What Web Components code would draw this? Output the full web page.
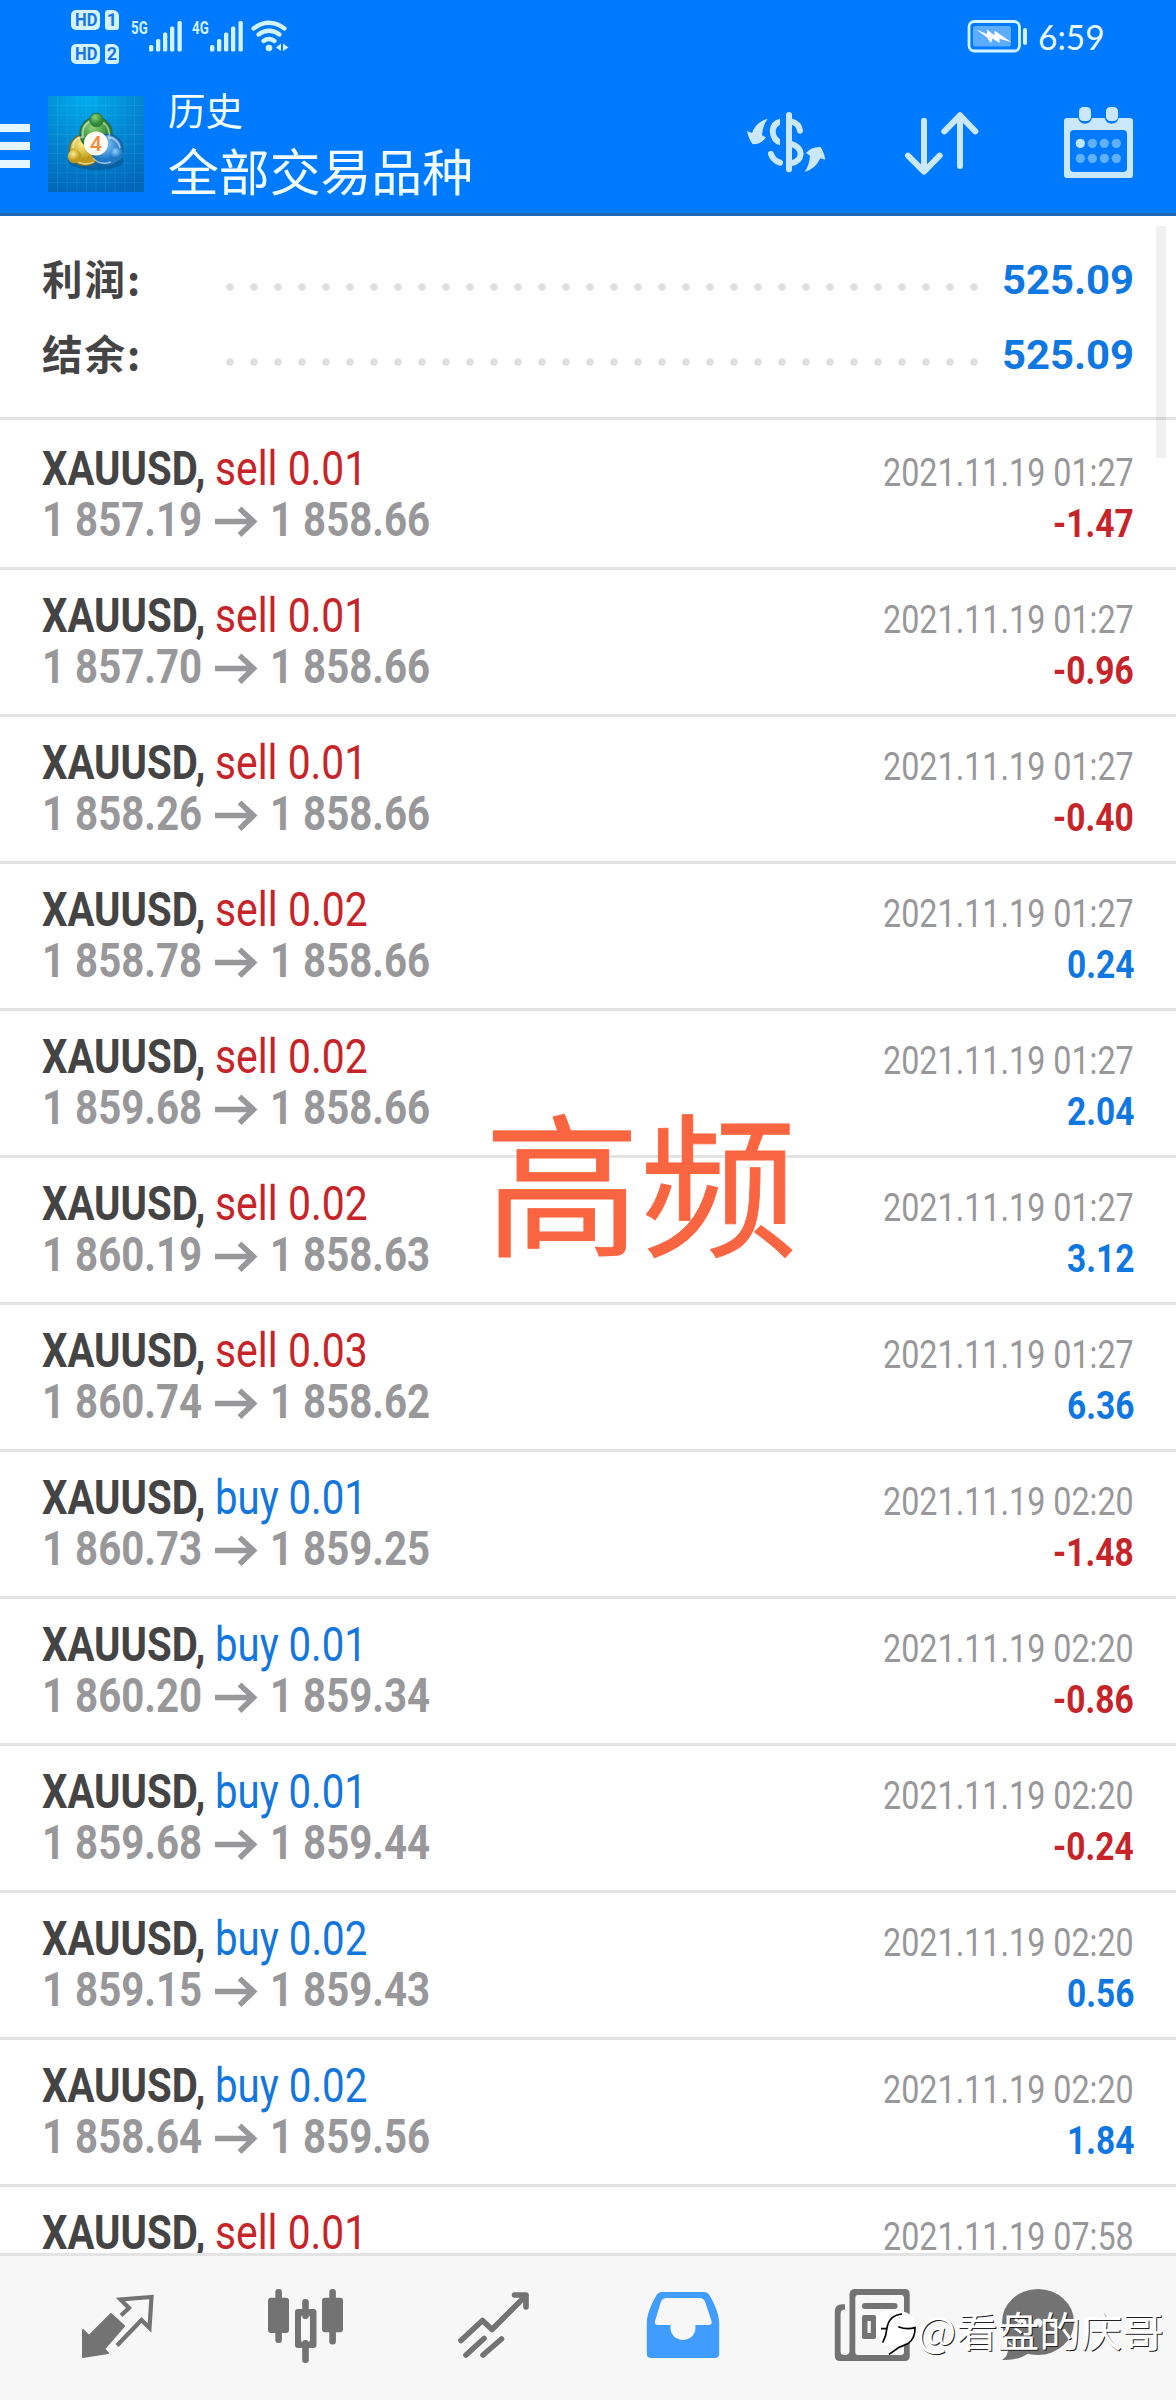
<!DOCTYPE html>
<html lang="zh-CN">
<head>
<meta charset="utf-8">
<title>历史</title>
<style>
html,body{margin:0;padding:0;background:#fff}
body{width:1176px;height:2400px;overflow:hidden;font-family:Roboto,"Noto Sans CJK SC",sans-serif}
</style>
</head>
<body>
<history-app></history-app>
<script>
// Single-line text squeezed horizontally to a given advance width.
class FitText extends HTMLElement{
  connectedCallback(){
    const w=+this.getAttribute('w');
    const r=this.attachShadow({mode:'open'});
    r.innerHTML=`<style>:host{display:block;width:${w}px;white-space:nowrap;flex:none}span{display:inline-block;transform-origin:0 50%}</style><span><slot></slot></span>`;
    const s=r.querySelector('span');
    s.style.transform=`scaleX(${w/s.offsetWidth})`;
  }
}
customElements.define('fit-text',FitText);

class StatusBar extends HTMLElement{
  connectedCallback(){
    const bars=[[1.5,45],[8.5,39],[15.5,32.5],[22.5,26.5],[30,21]].map(([x,y])=>`<rect x="${x-1.5}" y="${y-18}" width="4.3" height="${51.5-y}" rx="1.6"/>`).join('');
    this.attachShadow({mode:'open'}).innerHTML=`<style>
:host{display:flex;height:72px;padding:0 71px 0 71px;justify-content:space-between;color:#d2f3ff;fill:#d2f3ff;box-sizing:border-box}
.l,.r{display:flex;align-items:flex-start}
.hd{display:flex;flex-direction:column;gap:14px;padding-top:9.500px;width:49px}
.p{display:flex;gap:5px}
.b{height:20px;border-radius:5px;background:#d2f3ff;color:#1676e6;font:700 18px/20px "Roboto";display:flex;justify-content:center}
.b.a{width:29px}.b.n{width:14px;border-radius:3px 6px 3px 3px}
.net{display:flex;padding-top:18px}
.g{font:700 18px/20px Roboto;margin-left:11px}
.net .bars{margin-left:1px}
.net+.net .g{margin-left:10px}
svg{display:block}
.wifi{margin:20px 0 0 8px}
.bat{margin:20px 11px 0 0}
.time{font:400 35px/44px Lato;padding-top:14px;color:#eaf9ff}
</style>
<div class="l"><div class="hd">
<div class="p"><div class="b a"><fit-text w="22">HD</fit-text></div><div class="b n">1</div></div>
<div class="p"><div class="b a"><fit-text w="22">HD</fit-text></div><div class="b n">2</div></div></div>
<div class="net"><fit-text class="g" w="17">5G</fit-text><svg class="bars" width="33" height="36">${bars}</svg></div>
<div class="net"><fit-text class="g" w="17">4G</fit-text><svg class="bars" width="33" height="36">${bars}</svg></div>
<svg class="wifi" width="39" height="34" viewBox="251 20 39 34"><g fill="none" stroke="#d2f3ff" stroke-width="4.2" stroke-linecap="round"><path d="M253.5 28.5Q269 17 284.500 28.500M258.500 34.500Q269 27 279.500 34.500M263.500 41Q269 37 274.500 41"/></g><circle cx="269" cy="48" r="3.300"/><path d="M276 47.500L281 43.500V51zM283 43.500L288.500 47.500L283 51z"/></svg></div>
<div class="r"><svg class="bat" width="60" height="33" viewBox="967 20 60 33"><rect x="969" y="21.500" width="50.500" height="29.500" rx="5.500" fill="none" stroke="#d2f3ff" stroke-width="2.800"/><rect x="973" y="26" width="38" height="20.500" rx="2.500" fill="#5cacff"/><path fill="#fff" d="M976 29.500L987 34V29.500L994.500 35.500V30.500L1011 42L999.500 38.800V43L992.500 38.500L991 43L986.500 37z"/><rect x="1023" y="28" width="4" height="17" rx="2"/></svg>
<fit-text class="time" w="67">6:59</fit-text></div>`;
  }
}
customElements.define('status-bar',StatusBar);

class AppHeader extends HTMLElement{
  connectedCallback(){
    let grid='';
    for(let i=1;i<10;i++)grid+=`<path d="M${i*9.6} 0V96M0 ${i*9.6}H96"/>`;
    this.attachShadow({mode:'open'}).innerHTML=`<style>
:host{display:flex;height:141px;color:#f2fdff;align-items:flex-start}
svg{display:block;flex:none}
.menu{margin-top:52px;width:30px;display:flex;flex-direction:column;gap:10px}
.menu i{height:8px;background:#e6f6ff}
.logo{margin:24px 0 0 18px}
.t{margin-left:24px;width:579px;padding-top:10px}
.s{font:400 37.500px/54px "Noto Sans CJK SC";height:54px}
.m{font:400 50.500px/66px "Noto Sans CJK SC";height:66px}
</style>
<div class="menu"><i></i><i></i><i></i></div>
<svg class="logo" width="96" height="96"><defs>
<radialGradient id="bg" cx=".4" cy="0" r="1.050"><stop offset="0" stop-color="#00aeef"/><stop offset=".55" stop-color="#0484cf"/><stop offset="1" stop-color="#0066b8"/></radialGradient>
<radialGradient id="g" cx=".4" cy=".3"><stop offset="0" stop-color="#8fd07a"/><stop offset="1" stop-color="#2f8a35"/></radialGradient>
<radialGradient id="y" cx=".4" cy=".3"><stop offset="0" stop-color="#fbee88"/><stop offset="1" stop-color="#bf9a1a"/></radialGradient>
<radialGradient id="b" cx=".4" cy=".3"><stop offset="0" stop-color="#8fd0ff"/><stop offset="1" stop-color="#1f78c4"/></radialGradient></defs>
<rect width="96" height="96" fill="url(#bg)"/><g stroke="#6fd0ff" stroke-opacity=".13">${grid}</g>
<ellipse cx="48" cy="65" rx="28" ry="9" fill="#003b70" opacity=".35"/>
<g stroke-width="1.300"><circle cx="37" cy="54" r="15.500" fill="url(#y)" stroke="#7d6a1c"/><circle cx="48" cy="37.500" r="16" fill="url(#g)" stroke="#27663a"/><circle cx="59.500" cy="54" r="15.500" fill="url(#b)" stroke="#185b98"/></g>
<g fill="none" stroke="#fff" stroke-opacity=".5" stroke-width="1.800"><path d="M35 42Q33 29 43 25M61 43Q63 31 54 26M25 52Q25 41 36 41M30 66Q37 70 46 66M45 62Q52 70 63 66M72 52Q70 42 60 41"/></g>
<circle cx="48.500" cy="24" r="6.800" fill="url(#g)" stroke="#2c7a38"/><circle cx="26.500" cy="60.500" r="6.800" fill="url(#y)"/><circle cx="68.500" cy="58" r="6.500" fill="url(#b)"/>
<circle cx="48" cy="47.500" r="12" fill="#fffaf4"/><text x="48" y="55" font-family="Roboto" font-weight="500" font-size="21" text-anchor="middle" fill="#f58a3c">4</text></svg>
<div class="t"><div class="s">历史</div><fit-text class="m" w="305">全部交易品种</fit-text></div>
<svg width="430" height="90" viewBox="138 306 1290 270" style="margin-top:30px" fill="#cbe8fb">
<path d="M203 356Q189 374 186 406L198 412Q186 432 158 433Q146 418 141 393L156 399Q168 365 203 356z"/>
<path d="M313 516Q327 500 330 467L318 459Q334 440 361 441Q371 452 376 479L361 475Q348 506 313 516z"/>
<rect x="258" y="336" width="18" height="181" rx="9"/>
<path fill="none" stroke="#cbe8fb" stroke-width="18" stroke-linecap="round" d="M276 365Q297 371 300 392M213 462Q218 480 240 488"/>
<path d="M240 356Q210 362 209 393Q211 429 240 436V417Q227 409 227 394Q228 380 240 374zM276 423Q309 433 311 462Q308 492 276 498V480Q292 475 293 462Q292 448 276 442z"/>
<path fill="none" stroke="#cbe8fb" stroke-width="18" stroke-linecap="round" stroke-linejoin="round" d="M672 362V514M624 467L672 515L719 467M780 498V346M733 394L780 346L826 394"/>
<path fill-rule="evenodd" d="M1102 354H1134Q1138 371 1155 371Q1172 371 1176 354H1214Q1218 371 1235 371Q1252 371 1256 354H1289Q1299 354 1299 364V524Q1299 534 1289 534H1102Q1092 534 1092 524V364Q1092 354 1102 354zM1122 390Q1110 390 1110 402V504Q1110 516 1122 516H1269Q1281 516 1281 504V402Q1281 390 1269 390z"/>
<rect x="1137" y="321" width="36" height="42" rx="13"/><rect x="1218" y="321" width="36" height="42" rx="13"/>
<circle cx="1141" cy="430" r="14" fill="#bfe5ff"/><g fill="#5fb0ff"><circle cx="1177" cy="430" r="14"/><circle cx="1213" cy="430" r="14"/><circle cx="1249" cy="430" r="14"/><circle cx="1141" cy="475" r="14"/><circle cx="1177" cy="475" r="14"/><circle cx="1213" cy="475" r="14"/><circle cx="1249" cy="475" r="14"/></g>
</svg>`;
  }
}
customElements.define('app-header',AppHeader);

class SummaryLine extends HTMLElement{
  connectedCallback(){
    this.attachShadow({mode:'open'}).innerHTML=`<style>
:host{display:flex;height:75px;align-items:flex-start;padding:0 42px}
.k{width:184px;font:700 40.500px/60px "Noto Sans CJK SC";letter-spacing:2px;color:#444;padding-top:2px;height:60px}
.d{width:768px;height:24px;margin-left:-8px;background:radial-gradient(circle,#dedede 0 3.200px,transparent 4.400px) 0 0/24px 24px;margin-top:29px}
.v{margin-left:auto;font:700 41.500px/60px Roboto;color:#0f77e2;padding-top:4px}
</style><div class="k"><slot name="label"></slot></div><div class="d"></div><fit-text class="v" w="132"></fit-text>`;
    // The figure is laid out once its text is known.
    const v=document.createElement('fit-text');
    v.className='v';v.setAttribute('w','132');
    v.textContent=this.getAttribute('value');
    this.shadowRoot.querySelector('.v').replaceWith(v);
  }
}

class DealRow extends HTMLElement{
  connectedCallback(){
    const a=n=>this.getAttribute(n),profit=a('profit'),buy=a('side')==='buy';
    this.attachShadow({mode:'open'}).innerHTML=`<style>
:host{display:flex;height:144px;border-bottom:3px solid #e3e3e3;padding:0 42px;justify-content:space-between;flex:none}
.c{padding-top:21px}.c>div{display:flex;height:51px}
.sym{font:700 47.500px/51px Roboto;color:#444}
.side{font:400 47.500px/51px Roboto;color:${buy?'#1276dc':'#c62428'};margin-left:10px}
.p{font:700 47.500px/51px Roboto;color:#98989a}
svg{display:block;margin:0 12px 0 13px}
.r{padding-top:25px;display:flex;flex-direction:column;align-items:flex-end}
.date{font:400 39px/51px Roboto;color:#98989a;height:50px}
.v{font:700 38.500px/51px Roboto;color:${profit<0?'#c62428':'#0f77e2'}}
</style>
<div class="c"><div><fit-text class="sym" w="163">XAUUSD,</fit-text><fit-text class="side" w="${a('lots')==='0.01'?152:152.5}">${a('side')} ${a('lots')}</fit-text></div>
<div><fit-text class="p" w="160">${a('open')}</fit-text><svg width="43" height="51"><path d="M0 26.500H37M24.500 13.500L38.500 26.500L24.500 40" fill="none" stroke="#98989a" stroke-width="5.500"/></svg><fit-text class="p" w="160">${a('close')}</fit-text></div></div>
<div class="r"><fit-text class="date" w="251">${a('date')}</fit-text><fit-text class="v" w="${profit<0?81:67}">${profit}</fit-text></div>`;
  }
}
customElements.define('summary-line',SummaryLine);
customElements.define('deal-row',DealRow);

class TabBar extends HTMLElement{
  connectedCallback(){
    this.attachShadow({mode:'open'}).innerHTML=`<style>
:host{display:flex;height:144px;background:#f7f7f7;border-top:3px solid #e3e3e3;padding-left:81px;align-items:flex-start;fill:#737373;color:#737373;flex:none}
svg{display:block;margin-top:31px;flex:none}
svg:nth-of-type(2){margin-left:111px}
svg:nth-of-type(3){margin-left:113px}
svg:nth-of-type(4){margin-left:115.500px}
svg:nth-of-type(5){margin-left:114.500px}
svg:nth-of-type(6){margin-left:91px}
</style>
<svg width="75" height="80" viewBox="81 107 75 80"><path stroke="#737373" stroke-width="2" stroke-linejoin="round" d="M83 150L89 156L111 134L124 146L104 169L108 173L83 177z"/><path fill="none" stroke="#737373" stroke-width="4.200" d="M121 135.500L129 128L120.500 119.500L151.500 117L149.500 148L141.500 140L117 165.500"/></svg>
<svg width="77" height="80" viewBox="267 107 77 80"><g><rect x="275.300" y="109" width="6.600" height="54" rx="3"/><rect x="268" y="117.700" width="21" height="35.300" rx="3"/><rect x="302.200" y="119" width="6.600" height="20" rx="3"/><rect x="302.200" y="160" width="6.600" height="23" rx="3"/><path fill-rule="evenodd" d="M298 129H313.500Q316.500 129 316.500 132V165Q316.500 168 313.500 168H298Q295 168 295 165V132Q295 129 298 129zM304 135Q301 135 301 138V159.500Q301 162.500 304 162.500H307Q310 162.500 310 159.500V138Q310 135 307 135z"/><rect x="329.300" y="109" width="6.600" height="55.500" rx="3"/><rect x="322" y="117.700" width="21" height="34.600" rx="3"/></g></svg>
<svg width="73" height="80" viewBox="457 107 73 80" fill="none" stroke="#737373" stroke-width="5.600" stroke-linecap="round" stroke-linejoin="round"><path d="M461 160.500L482.500 140.500L492 149.500L526 115.500M514.500 115H526V127M466 175L484 158.500M483 175L501.500 159"/></svg>
<svg width="74" height="80" viewBox="645.500 107 74 80"><path fill="#409cff" fill-rule="evenodd" d="M662 112H703Q708 112 710 117C715 126 718.700 135 718.700 143V174Q718.700 178 714 178H651Q646.300 178 646.300 174V143C646.300 135 650 126 655 117Q657 112 662 112zM666 118Q662 118 660.500 121.500L654.500 141Q653.700 145 657.500 145H670V148C670 155 676 160 682.500 160S695 155 695 148V145H708Q712 145 711 141L704.500 121.500Q703 118 699 118z"/></svg>
<svg width="76" height="80" viewBox="834 107 76 80"><path fill-rule="evenodd" d="M855 109H905Q909.700 109 909.700 114V176Q909.700 181 905 181H840Q834.800 181 834.800 176V131Q835 124.500 842 124.300H845V129.500Q840.600 129.500 840.600 134V172Q840.600 175 845 175Q849.500 175 849.500 171V114Q850 109 855 109zM858 115Q855.300 115 855.300 118V172Q855.300 175 858 175H901Q904 175 904 172V118Q904 115 901 115z"/><rect x="862" y="123" width="35.600" height="6" rx="3"/><path fill-rule="evenodd" d="M864 135H874Q876 135 876 137V157Q876 159 874 159H864Q862 159 862 157V137Q862 135 864 135zM867.500 141H870.800V153H867.500z"/><rect x="882" y="135" width="15.600" height="6" rx="3"/><rect x="882" y="153" width="15.600" height="6" rx="3"/></svg>
<svg width="75" height="80" viewBox="1001 107 75 80"><ellipse cx="1038" cy="142" rx="36" ry="33"/><path d="M1005 163Q1012 173 1002 180Q1019 181 1030 172z"/><g fill="#f7f7f7"><circle cx="1022" cy="143" r="4.500"/><circle cx="1038" cy="143" r="4.500"/><circle cx="1054" cy="143" r="4.500"/></g></svg>`;
  }
}
customElements.define('tab-bar',TabBar);

class PhotoSign extends HTMLElement{
  connectedCallback(){
    this.attachShadow({mode:'open'}).innerHTML=`<style>
:host{display:flex;align-items:center;color:#fff;font:400 40.500px/56px "Noto Sans CJK SC";text-shadow:1px 1px 0 #222}
svg{display:block}
</style><svg width="44" height="56" viewBox="156 110 132 168"><path fill="#fff" d="M166 178Q160 140 200 138Q240 136 258 142Q284 152 281 186Q284 218 262 234Q240 246 206 266L214 240Q190 246 180 228Q168 205 166 178z"/><path fill="none" stroke="#000" stroke-width="5" d="M185 232Q196 212 198 188Q204 150 243 146M180 190H198M232 184Q256 194 282 187M282 184Q284 218 262 234Q244 243 234 246L204 267"/></svg><fit-text w="247"><slot></slot></fit-text>`;
  }
}
customElements.define('photo-sign',PhotoSign);

class DealPeek extends HTMLElement{
  connectedCallback(){
    this.attachShadow({mode:'open'}).innerHTML=`<style>
:host{display:flex;padding:0 42px;justify-content:space-between}
.c{padding-top:21px;display:flex}
.sym{font:700 47.500px/51px Roboto;color:#444}
.side{font:400 47.500px/51px Roboto;color:#c62428;margin-left:10px}
.date{padding-top:25px;font:400 39px/51px Roboto;color:#98989a}
</style><div class="c"><fit-text class="sym" w="163">XAUUSD,</fit-text><fit-text class="side" w="152">sell 0.01</fit-text></div><fit-text class="date" w="251">2021.11.19 07:58</fit-text>`;
  }
}
customElements.define('deal-peek',DealPeek);

class HistoryApp extends HTMLElement{
  connectedCallback(){
    const D='2021.11.19 ';
    const rows=[
['sell','0.01','1 857.19','1 858.66','01:27','-1.47'],
['sell','0.01','1 857.70','1 858.66','01:27','-0.96'],
['sell','0.01','1 858.26','1 858.66','01:27','-0.40'],
['sell','0.02','1 858.78','1 858.66','01:27','0.24'],
['sell','0.02','1 859.68','1 858.66','01:27','2.04'],
['sell','0.02','1 860.19','1 858.63','01:27','3.12'],
['sell','0.03','1 860.74','1 858.62','01:27','6.36'],
['buy','0.01','1 860.73','1 859.25','02:20','-1.48'],
['buy','0.01','1 860.20','1 859.34','02:20','-0.86'],
['buy','0.01','1 859.68','1 859.44','02:20','-0.24'],
['buy','0.02','1 859.15','1 859.43','02:20','0.56'],
['buy','0.02','1 858.64','1 859.56','02:20','1.84']];
    this.attachShadow({mode:'open'}).innerHTML=`<style>
:host{display:flex;flex-direction:column;width:1176px;height:2400px;position:relative;overflow:hidden;background:#fff}
header{background:#007aff;height:213px;border-bottom:3px solid #1d69b8;flex:none}
.sum{height:171px;padding-top:30px;border-bottom:3px solid #e3e3e3;margin-bottom:3px;flex:none}
.list{flex:1;min-height:0;overflow:hidden;display:flex;flex-direction:column}
.last{height:66px;overflow:hidden;flex:none}
.scroll{position:absolute;left:1156px;top:226px;width:10px;height:232px;background:rgba(0,0,0,.06)}
.note{position:absolute;left:484px;top:1066px;font:400 154px/224px "Noto Sans CJK SC";color:#f96540;-webkit-text-stroke:.8px #f96540}
photo-sign{position:absolute;left:873px;top:2302px}
</style>
<header><status-bar></status-bar><app-header></app-header></header>
<div class="sum"><summary-line value="525.09"><span slot="label">利润:</span></summary-line><summary-line value="525.09"><span slot="label">结余:</span></summary-line></div>
<div class="list">${rows.map(r=>`<deal-row side="${r[0]}" lots="${r[1]}" open="${r[2]}" close="${r[3]}" date="${D+r[4]}" profit="${r[5]}"></deal-row>`).join('')}
<div class="last"><deal-peek></deal-peek></div></div>
<tab-bar></tab-bar>
<div class="scroll"></div><fit-text class="note" w="313">高频</fit-text><photo-sign>@看盘的庆哥</photo-sign>`;
  }
}
customElements.define('history-app',HistoryApp);
</script>
</body>
</html>
